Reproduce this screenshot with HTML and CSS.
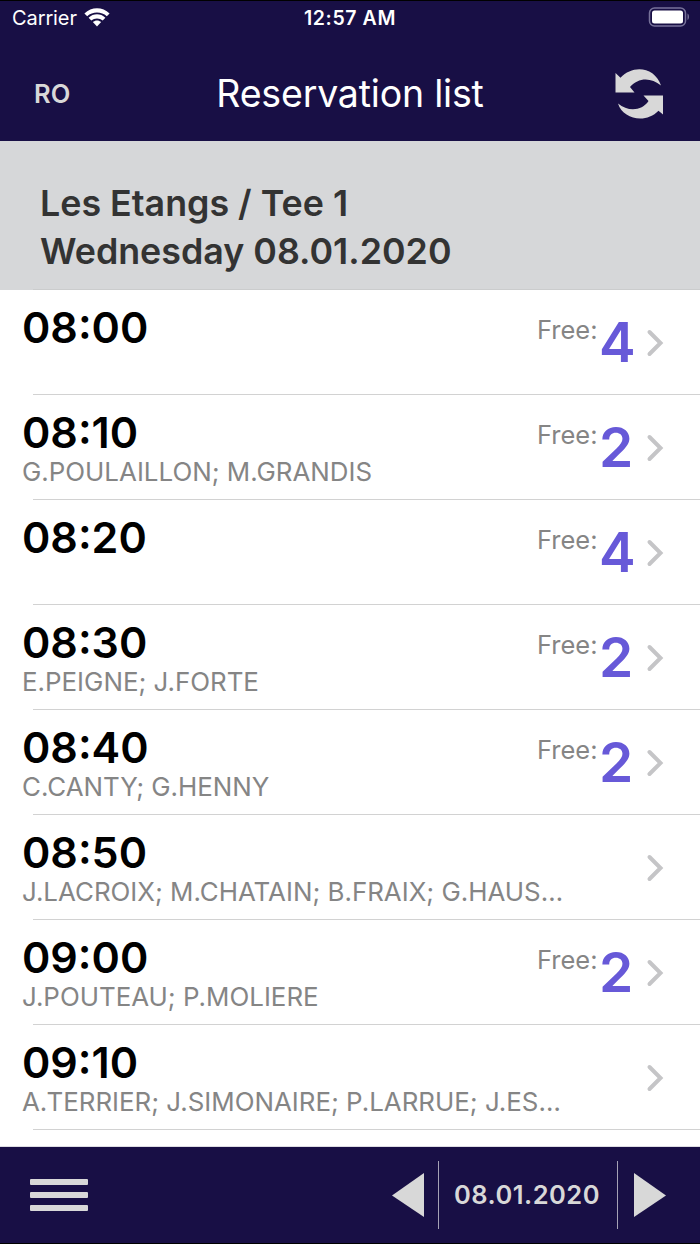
FILE: index.html
```html
<!DOCTYPE html>
<html lang="en">
<head>
    <meta charset="UTF-8">
    <meta name="viewport" content="width=device-width, initial-scale=1.0">
    <title>Reservation list</title>
    <link rel="stylesheet" href="styles.css">
</head>
<body>
    <div class="app">
        <header class="top">
            <div class="status-bar">
                <div class="carrier">
                    <span>Carrier</span>
                    <svg class="wifi" width="26" height="19" viewBox="0 0 26 19">
                        <path d="M.4 5.4C7.5-1.500 18.500-1.500 25.600 5.400L22.800 8.300C17.500 3.300 8.500 3.300 3.200 8.300Z"/>
                        <path d="M4.600 9.700C9.400 5.200 16.600 5.200 21.400 9.700L18.700 12.500C15.600 9.700 10.400 9.700 7.300 12.500Z"/>
                        <path d="M8.800 14.100C11.200 12 14.800 12 17.200 14.100L13 18.600Z"/>
                    </svg>
                </div>
                <span class="clock">12:57 AM</span>
                <svg class="battery" width="42" height="20" viewBox="0 0 42 20">
                    <rect class="battery-case" x="1.500" y="1" width="36" height="18" rx="5"/>
                    <rect class="battery-level" x="4" y="3.500" width="31" height="13" rx="2.500"/>
                    <path class="battery-tip" d="M39.500 6.500C41.500 7.500 41.500 12 39.500 13Z"/>
                </svg>
            </div>
            <div class="nav-bar">
                <span class="user">RO</span>
                <h1>Reservation list</h1>
                <svg class="refresh" width="50" height="52" viewBox="0 0 50 52">
                    <path d="M.5 5L5.500 9.800C18-4 40-1 46 17.500C36 9 23 9.500 15 19L19.500 24.500H.5Z"/>
                    <path d="M48 46.500L43.500 42.800C31 56 8 51.500 3 35.500C13 44 27 43 33.500 33L28.500 27.500H48Z"/>
                </svg>
            </div>
        </header>

        <div class="course">
            <p>Les Etangs / Tee 1</p>
            <p class="course-date">Wednesday 08.01.2020</p>
        </div>

        <ul id="tee-list" class="tee-list"></ul>

        <footer class="toolbar">
            <div class="menu">
                <span></span>
                <span></span>
                <span></span>
            </div>
            <div class="date-picker">
                <svg class="arrow" width="32" height="44" viewBox="0 0 32 44"><path d="M32 0V44L0 22.500Z"/></svg>
                <span class="date">08.01.2020</span>
                <svg class="arrow" width="32" height="44" viewBox="0 0 32 44"><path d="M0 0V44L32 22.500Z"/></svg>
            </div>
        </footer>
    </div>

    <script>
        const teeTimes = [
            { time: "08:00", players: "", free: 4 },
            { time: "08:10", players: "G.POULAILLON; M.GRANDIS", free: 2 },
            { time: "08:20", players: "", free: 4 },
            { time: "08:30", players: "E.PEIGNE; J.FORTE", free: 2 },
            { time: "08:40", players: "C.CANTY; G.HENNY", free: 2 },
            { time: "08:50", players: "J.LACROIX; M.CHATAIN; B.FRAIX; G.HAUS…", free: 0 },
            { time: "09:00", players: "J.POUTEAU; P.MOLIERE", free: 2 },
            { time: "09:10", players: "A.TERRIER; J.SIMONAIRE; P.LARRUE; J.ES…", free: 0 }
        ];
        const teeList = document.getElementById("tee-list");

        teeTimes.forEach((item) => {
            const li = document.createElement("li");
            // Full slots have no "Free" counter
            const free = item.free
                ? `<span class="free-label">Free:</span><span class="free-count">${item.free}</span>`
                : "";
            li.innerHTML = `
                <div class="slot">
                    <div class="time">${item.time}</div>
                    <div class="players">${item.players}</div>
                </div>
                <div class="free">${free}</div>
                <svg class="chevron" width="18" height="28" viewBox="0 0 18 28"><path d="M3.500 3L14.500 14L3.500 25"/></svg>
            `;
            teeList.appendChild(li);
        });
    </script>
</body>
</html>
```
FILE: styles.css
```css
* {
    box-sizing: border-box;
}

body {
    font-family: Inter, "Liberation Sans", sans-serif;
    background-color: #fff;
    margin: 0;
}

h1, p, ul {
    margin: 0;
    padding: 0;
}

.app {
    display: flex;
    flex-direction: column;
    width: 700px;
    height: 1244px;
    overflow: hidden;
}

.top {
    height: 141px;
    background-color: #180f45;
    border-top: 1px solid #000;
    color: #fff;
}

.status-bar {
    display: grid;
    grid-template-columns: 1fr auto 1fr;
    align-items: center;
    height: 34px;
    padding: 0 10px 0 12px;
    font-size: 20px;
}

.carrier {
    display: flex;
    align-items: center;
    gap: 7px;
    letter-spacing: -0.1px;
}

.wifi {
    fill: #fff;
    margin-top: -2px;
}

.clock {
    font-weight: 600;
    font-size: 19.5px;
    letter-spacing: 0.6px;
    margin-right: 2px;
}

.battery {
    justify-self: end;
    margin-top: -2px;
}

.battery-case {
    fill: none;
    stroke: #77729a;
    stroke-width: 1.5;
}

.battery-level {
    fill: #fff;
}

.battery-tip {
    fill: #77729a;
}

.nav-bar {
    display: grid;
    grid-template-columns: 1fr auto 1fr;
    align-items: center;
    height: 106px;
    padding: 11px 35px 0 34px;
}

.user {
    font-size: 25.5px;
    font-weight: 600;
    color: #d8d8d8;
}

h1 {
    font-size: 37.5px;
    font-weight: 400;
    line-height: 46px;
    letter-spacing: -0.2px;
    margin-left: 1px;
}

.refresh {
    justify-self: end;
    fill: #d8d8d8;
}

.course {
    height: 149px;
    padding: 38px 40px 0;
    background: linear-gradient(#cbcccd, #cbcccd) 33px 100% / 100% 1px no-repeat #d6d7d9;
    color: #333;
    font-size: 35.8px;
    font-weight: 600;
    line-height: 48px;
}

.tee-list {
    flex: 1;
    list-style-type: none;
}

.tee-list li {
    display: flex;
    height: 105px;
    padding: 11px 36px 0 22px;
    /* separator starts 33px in from the left edge */
    background: linear-gradient(#d2d2d2, #d2d2d2) 33px 100% / 100% 1px no-repeat;
}

.slot {
    flex: 1;
    min-width: 0;
}

.time {
    font-size: 43px;
    font-weight: 600;
    line-height: 52px;
    color: #000;
}

.players {
    font-size: 25.9px;
    line-height: 28px;
    color: #858585;
    white-space: nowrap;
}

.free {
    display: flex;
    width: 104px;
    margin-right: 5px;
}

.free-label {
    width: 62px;
    font-size: 25.5px;
    line-height: 57px;
    color: #858585;
}

.free-count {
    font-size: 55px;
    font-weight: 600;
    line-height: 83px;
    color: #6759d8;
}

.chevron {
    flex-shrink: 0;
    margin-top: 28px;
    fill: none;
    stroke: #c5c5c7;
    stroke-width: 4;
    stroke-linecap: round;
}

.toolbar {
    display: flex;
    justify-content: space-between;
    align-items: center;
    height: 98px;
    padding: 0 34px 0 30px;
    background-color: #180f45;
    border-top: 1px solid #dedde3;
    border-bottom: 1px solid #000;
}

.menu {
    display: flex;
    flex-direction: column;
    gap: 7px;
}

.menu span {
    width: 58px;
    height: 6px;
    border-radius: 1px;
    background-color: #d8d8d8;
}

.date-picker {
    display: flex;
    align-items: center;
}

.arrow {
    fill: #d8d8d8;
}

.date {
    width: 180px;
    margin: 0 16px 0 14px;
    padding-right: 2px;
    border: 1px solid #a5a2b5;
    border-width: 0 1px;
    font-size: 25.5px;
    font-weight: 600;
    line-height: 68px;
    letter-spacing: 0.5px;
    text-align: center;
    color: #d8d8d8;
}
```
